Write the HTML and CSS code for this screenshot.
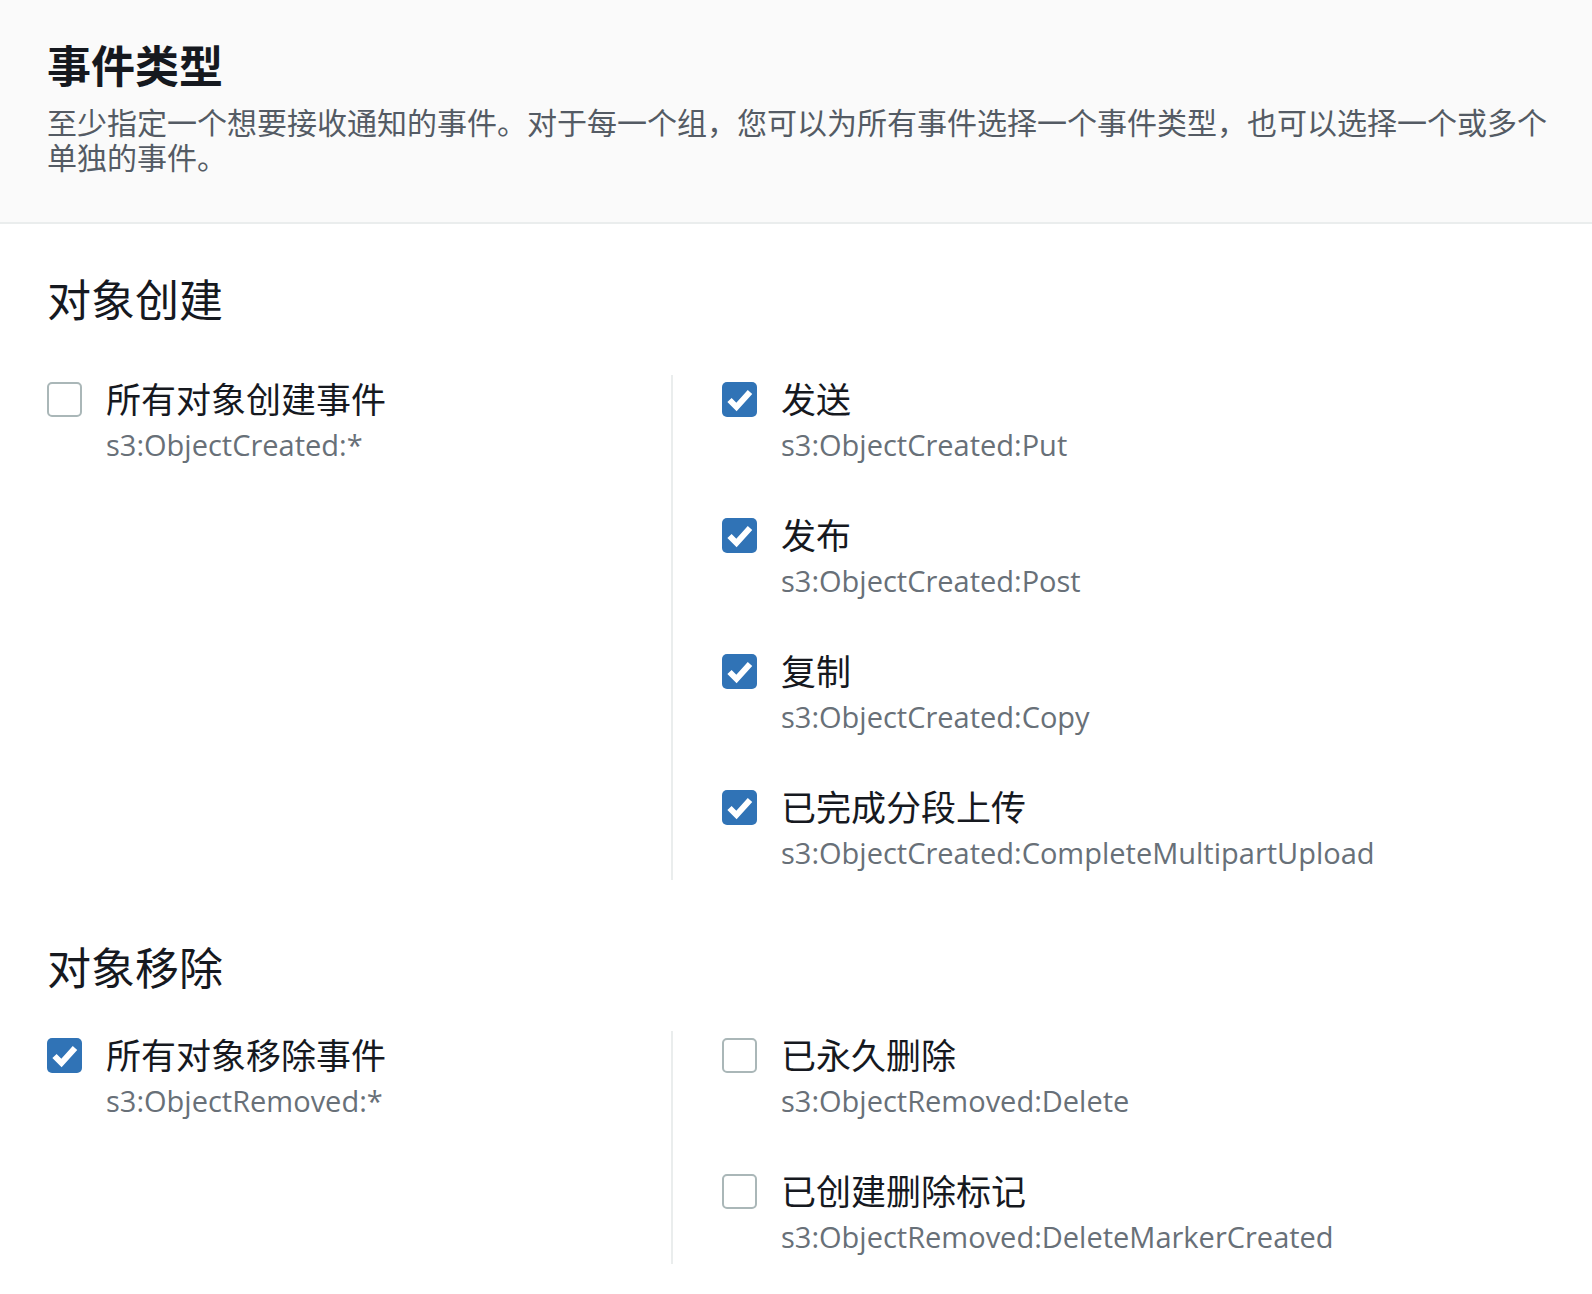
FILE: index.html
```html
<!DOCTYPE html>
<html lang="zh-CN">
<head>
<meta charset="utf-8">
<title>事件类型</title>
<link rel="stylesheet" href="styles.css">
</head>
<body>
<div class="panel">
  <header class="panel-header">
    <h2 class="panel-title">事件类型</h2>
    <p class="panel-desc">至少指定一个想要接收通知的事件。对于每一个组，您可以为所有事件选择一个事件类型，也可以选择一个或多个单独的事件。</p>
  </header>
  <div class="panel-body">
    <section class="group">
      <h3 class="group-title">对象创建</h3>
      <div class="columns">
        <div class="col col-left">
          <label class="item">
            <span class="box"></span>
            <span class="text">
              <span class="label">所有对象创建事件</span>
              <span class="sub">s3:ObjectCreated:*</span>
            </span>
          </label>
        </div>
        <div class="col col-right">
          <label class="item">
            <span class="box checked"><svg viewBox="0 0 35 35"><path d="M7.5 18 L14.5 25 L28 10"/></svg></span>
            <span class="text">
              <span class="label">发送</span>
              <span class="sub">s3:ObjectCreated:Put</span>
            </span>
          </label>
          <label class="item">
            <span class="box checked"><svg viewBox="0 0 35 35"><path d="M7.5 18 L14.5 25 L28 10"/></svg></span>
            <span class="text">
              <span class="label">发布</span>
              <span class="sub">s3:ObjectCreated:Post</span>
            </span>
          </label>
          <label class="item">
            <span class="box checked"><svg viewBox="0 0 35 35"><path d="M7.5 18 L14.5 25 L28 10"/></svg></span>
            <span class="text">
              <span class="label">复制</span>
              <span class="sub">s3:ObjectCreated:Copy</span>
            </span>
          </label>
          <label class="item">
            <span class="box checked"><svg viewBox="0 0 35 35"><path d="M7.5 18 L14.5 25 L28 10"/></svg></span>
            <span class="text">
              <span class="label">已完成分段上传</span>
              <span class="sub">s3:ObjectCreated:CompleteMultipartUpload</span>
            </span>
          </label>
        </div>
      </div>
    </section>
    <section class="group group-second">
      <h3 class="group-title">对象移除</h3>
      <div class="columns">
        <div class="col col-left">
          <label class="item">
            <span class="box checked"><svg viewBox="0 0 35 35"><path d="M7.5 18 L14.5 25 L28 10"/></svg></span>
            <span class="text">
              <span class="label">所有对象移除事件</span>
              <span class="sub">s3:ObjectRemoved:*</span>
            </span>
          </label>
        </div>
        <div class="col col-right">
          <label class="item">
            <span class="box"></span>
            <span class="text">
              <span class="label">已永久删除</span>
              <span class="sub">s3:ObjectRemoved:Delete</span>
            </span>
          </label>
          <label class="item">
            <span class="box"></span>
            <span class="text">
              <span class="label">已创建删除标记</span>
              <span class="sub">s3:ObjectRemoved:DeleteMarkerCreated</span>
            </span>
          </label>
        </div>
      </div>
    </section>
  </div>
</div>
</body>
</html>
```

FILE: styles.css
```css
* {
  box-sizing: border-box;
}

html, body {
  margin: 0;
  padding: 0;
  background: #ffffff;
}

body {
  font-family: "Liberation Sans", "Noto Sans CJK SC", sans-serif;
  color: #16191f;
}

.panel-header {
  background: #fafafa;
  border-bottom: 2px solid #eaeded;
  padding: 40px 36px 46px 47px;
}

.panel-title {
  margin: 0;
  font-size: 44px;
  line-height: 56px;
  font-weight: 700;
  color: #16191f;
}

.panel-desc {
  margin: 10px 0 0;
  font-size: 30px;
  line-height: 35px;
  color: #545b64;
}

.panel-body {
  padding: 50px 47px 0;
}

.group-title {
  margin: 0;
  font-size: 44px;
  line-height: 56px;
  font-weight: 400;
  color: #16191f;
}

.columns {
  display: grid;
  grid-template-columns: 624px 1fr;
  margin-top: 45px;
}

.group-second {
  margin-top: 62px;
}

.group-second .columns {
  margin-top: 33px;
}

.col {
  display: flex;
  flex-direction: column;
  gap: 48px;
  padding: 4px 0 5px;
}

.col-right {
  border-left: 2px solid #eaeded;
  padding-left: 49px;
}

.item {
  display: flex;
  align-items: flex-start;
  gap: 24px;
}

.box {
  flex: none;
  width: 35px;
  height: 35px;
  margin-top: 3px;
  border: 2.5px solid #aab7b8;
  border-radius: 5px;
  background: #ffffff;
  display: flex;
  align-items: center;
  justify-content: center;
}

.box.checked {
  background: #3073b6;
  border: none;
}

.box svg {
  width: 35px;
  height: 35px;
  display: block;
}

.box svg path {
  fill: none;
  stroke: #ffffff;
  stroke-width: 6;
  stroke-linejoin: miter;
  stroke-linecap: butt;
}

.text {
  display: flex;
  flex-direction: column;
}

.label {
  font-size: 35px;
  line-height: 44px;
  color: #16191f;
}

.sub {
  font-family: "Open Sans", "Liberation Sans", sans-serif;
  font-size: 29px;
  line-height: 44px;
  color: #687078;
}
```
